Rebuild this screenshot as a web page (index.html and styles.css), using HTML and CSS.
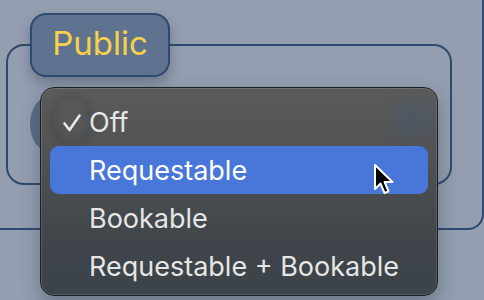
FILE: index.html
```html
<!DOCTYPE html>
<html>
<head>
<meta charset="utf-8">
<link rel="stylesheet" href="styles.css">
</head>
<body>
<div class="stage">
  <div class="outer-frame"></div>
  <div class="inner-frame"></div>
  <div class="avatar"></div>
  <div class="pill">Public</div>
  <div class="menu">
    <div class="blur-spot"></div>
    <div class="blur-ring"></div>
    <div class="item">
      <svg class="check" width="20" height="20" viewBox="0 0 20 20"><path d="M2.5 10.5 L7.5 17 L17.5 2.5" fill="none" stroke="#e8e8e8" stroke-width="2.6" stroke-linecap="round" stroke-linejoin="round"/></svg>
      Off
    </div>
    <div class="item active">Requestable</div>
    <div class="item">Bookable</div>
    <div class="item">Requestable + Bookable</div>
  </div>
  <svg class="cursor" width="24" height="34" viewBox="0 0 24 34">
    <path d="M2 2 L2 26 L7.5 20.5 L11.5 30 L15.5 28.3 L11.6 19 L19.5 19 Z" fill="#000" stroke="#fff" stroke-width="2" stroke-linejoin="round"/>
  </svg>
</div>
</body>
</html>
```
FILE: styles.css
```css
html, body {
  margin: 0;
  padding: 0;
}
body {
  width: 484px;
  height: 300px;
  overflow: hidden;
  font-family: Inter, "Noto Sans", sans-serif;
}
.stage {
  position: relative;
  width: 484px;
  height: 300px;
  overflow: hidden;
  background: #939fb0;
}
.outer-frame {
  position: absolute;
  left: -40px;
  top: -40px;
  width: 520px;
  height: 266px;
  border: 2px solid #2f4a6e;
  border-radius: 16px;
}
.inner-frame {
  position: absolute;
  left: 6px;
  top: 44px;
  width: 442px;
  height: 137px;
  border: 2px solid #2f4a6e;
  border-radius: 18px;
}
.avatar {
  position: absolute;
  left: 30px;
  top: 96px;
  width: 40px;
  height: 56px;
  border-radius: 50%;
  background: #5b6d88;
}
.pill {
  position: absolute;
  left: 30px;
  top: 13px;
  width: 136px;
  height: 60px;
  box-sizing: content-box;
  border: 2px solid #2e4a70;
  border-radius: 16px;
  background: #5f7390;
  color: #f6d24a;
  font-size: 33px;
  line-height: 57px;
  text-align: center;
  box-shadow: 0 6px 12px rgba(40, 50, 70, 0.35);
}
.menu {
  position: absolute;
  left: 40px;
  top: 87px;
  width: 398px;
  height: 209px;
  border: 1px solid #1d1f22;
  border-radius: 14px;
  background: linear-gradient(180deg, #5b5b5b 0%, #4d5052 40%, #3f454a 75%, #3c4349 100%);
  box-shadow: inset 0 0 0 1px rgba(255,255,255,0.12), 0 8px 20px rgba(30,40,55,0.35);
  padding: 10px 9px 0 9px;
  box-sizing: border-box;
  display: flex;
  flex-direction: column;
  overflow: hidden;
}
.blur-spot {
  position: absolute;
  right: 2px;
  top: 10px;
  width: 44px;
  height: 40px;
  border-radius: 50%;
  background: rgba(75, 88, 108, 0.45);
  filter: blur(6px);
}
.blur-ring {
  position: absolute;
  left: 10px;
  top: 6px;
  width: 36px;
  height: 46px;
  border-radius: 50%;
  border: 3px solid rgba(40, 45, 50, 0.35);
  filter: blur(3px);
}
.item {
  position: relative;
  height: 48px;
  flex: none;
  display: flex;
  align-items: center;
  padding-left: 39px;
  color: #e6e6e6;
  font-size: 27px;
  border-radius: 9px;
}
.item.active {
  background: #4976d9;
  color: #ffffff;
}
.check {
  position: absolute;
  left: 12px;
  top: 15px;
}
.cursor {
  position: absolute;
  left: 373px;
  top: 163px;
}
```
